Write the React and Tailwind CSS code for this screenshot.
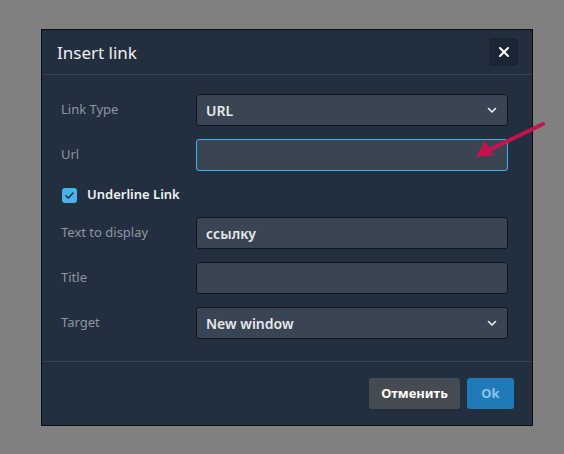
import React from "react";

const Chevron = () => (
  <svg width="10" height="10" viewBox="0 0 10 10" className="absolute right-[10px] top-1/2 -translate-y-1/2">
    <path d="M1.5 3.5 L5 7 L8.5 3.5" fill="none" stroke="#e8ecef" strokeWidth="1.6" strokeLinecap="round" strokeLinejoin="round" />
  </svg>
);

function Row({ label, children }) {
  return (
    <div className="flex items-center h-[32px]">
      <div className="w-[154px] pl-[19px] text-[13px] text-[#8d97a1]">{label}</div>
      {children}
    </div>
  );
}

function Field({ value, focused, select }) {
  return (
    <div
      className={
        "relative w-[312px] h-[32px] rounded-[3px] bg-[#3a4553] flex items-center pl-[9px] text-[14px] font-semibold text-[#e6e9ec] border " +
        (focused ? "border-[#3fb0e8]" : "border-[#10161d]")
      }
    >
      {value}
      {select && <Chevron />}
    </div>
  );
}

export default function App() {
  return (
    <div
      className="relative w-[564px] h-[454px] bg-[#808080] pt-[29px] pl-[41px] overflow-hidden"
      style={{ fontFamily: '"Noto Sans", "Open Sans", sans-serif' }}
    >
      <div className="w-[492px] h-[397px] bg-[#222f3e] border border-[#0b0f14] flex flex-col">
        <div className="h-[45px] flex items-center justify-between pl-[15px] pr-[14px] border-b border-[#354252]">
          <span className="text-[17px] text-[#eef1f3] leading-none">Insert link</span>
          <div className="w-[29px] h-[28px] rounded-[3px] bg-[#1b2633] flex items-center justify-center">
            <svg width="12" height="12" viewBox="0 0 12 12">
              <path d="M2 2 L10 10 M10 2 L2 10" stroke="#ffffff" strokeWidth="2" strokeLinecap="round" />
            </svg>
          </div>
        </div>
        <div className="flex-1 flex flex-col pt-[19px]">
          <Row label="Link Type">
            <Field value="URL" select />
          </Row>
          <div className="h-[13px]" />
          <Row label="Url">
            <Field value="" focused />
          </Row>
          <div className="h-[15px]" />
          <div className="flex items-center h-[18px] pl-[20px] gap-[10px]">
            <div className="w-[15px] h-[15px] rounded-[3px] bg-[#47b3ea] flex items-center justify-center">
              <svg width="11" height="11" viewBox="0 0 11 11">
                <path d="M2 5.8 L4.4 8 L9 3" fill="none" stroke="#1e2b3a" strokeWidth="1.4" strokeLinecap="round" strokeLinejoin="round" />
              </svg>
            </div>
            <span className="text-[13px] font-semibold text-[#eef1f3]">Underline Link</span>
          </div>
          <div className="h-[13px]" />
          <Row label="Text to display">
            <Field value="ссылку" />
          </Row>
          <div className="h-[13px]" />
          <Row label="Title">
            <Field value="" />
          </Row>
          <div className="h-[13px]" />
          <Row label="Target">
            <Field value="New window" select />
          </Row>
        </div>
        <div className="h-[64px] border-t border-[#354252] flex items-start justify-end gap-[7px] pr-[18px] pt-[16px]">
          <button className="w-[91px] h-[31px] rounded-[3px] bg-[#454b50] text-white text-[13px] font-bold">Отменить</button>
          <button className="w-[47px] h-[31px] rounded-[3px] bg-[#207ab7] text-[#8cc3e6] text-[13px] font-bold">Ok</button>
        </div>
      </div>
      <svg className="absolute left-0 top-0" width="564" height="454" viewBox="0 0 564 454">
        <path d="M543 124 L489 150" stroke="#c4134f" strokeWidth="4" strokeLinecap="round" />
        <path d="M476 157 L485 141 L494 155 Z" fill="#c4134f" />
      </svg>
    </div>
  );
}
